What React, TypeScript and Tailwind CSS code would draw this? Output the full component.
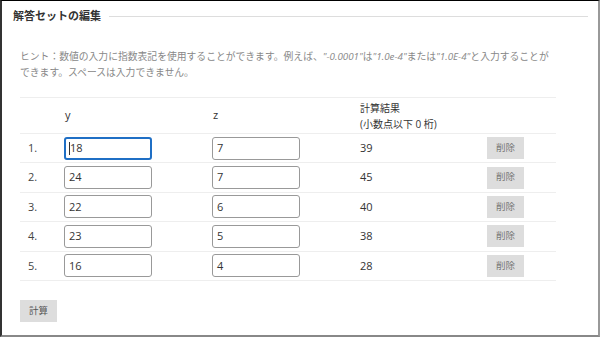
const rows = [
  { n: 1, y: '18', z: '7', r: '39' },
  { n: 2, y: '24', z: '7', r: '45' },
  { n: 3, y: '22', z: '6', r: '40' },
  { n: 4, y: '23', z: '5', r: '38' },
  { n: 5, y: '16', z: '4', r: '28' },
];

const font = { fontFamily: '"Open Sans", "Noto Sans CJK JP", sans-serif' };

const App = () => {
  return (
    <div
      className="w-[600px] h-[337px] bg-white border-t border-l-2 border-r-2 border-b-2 border-t-black border-l-[#333] border-r-[#999] border-b-[#888] overflow-hidden text-[#333]"
      style={font}
    >
      <div className="flex items-center pl-[11px] pr-[10px] pt-[7px]">
        <h2 className="text-[11px] font-bold text-[#333] leading-[16px] whitespace-nowrap">解答セットの編集</h2>
        <div className="flex-1 ml-[8px] h-px bg-[#ddd]" />
      </div>

      <div className="pl-[18px] pr-[20px] pt-[25px]">
        <p className="text-[9.8px] leading-[16px] text-[#888] whitespace-nowrap">
          ヒント：数値の入力に指数表記を使用することができます。例えば、
          <i>"-0.0001"</i>は<i>"1.0e-4"</i>または<i>"1.0E-4"</i>と入力することが
          <br />
          できます。スペースは入力できません。
        </p>

        <div className="mt-[16px] w-[536px] border-t border-[#eee] text-[11px]">
          <div className="grid grid-cols-[44px_148px_148px_127px_69px] h-[36px] border-b border-[#eee] items-center">
            <div />
            <div className="pl-[1px] text-[#333]">y</div>
            <div className="pl-[1px] text-[#333]">z</div>
            <div className="text-[10px] leading-[16px] text-[#333]">
              <div>計算結果</div>
              <div>(小数点以下 0 桁)</div>
            </div>
            <div />
          </div>
          {rows.map((row) => (
            <div
              key={row.n}
              className="grid grid-cols-[44px_148px_148px_127px_69px] h-[29.4px] border-b border-[#eee] items-center"
            >
              <div className="pl-[8px] text-[#444]">{row.n}.</div>
              <div>
                <div
                  className={
                    row.n === 1
                      ? 'w-[88px] h-[23px] rounded-[3px] border-2 border-[#1f6fc5] flex items-center pl-[3px] text-[#333]'
                      : 'w-[88px] h-[23px] rounded-[3px] border border-[#999] flex items-center pl-[4px] text-[#333]'
                  }
                >
                  {row.n === 1 && <span className="w-px h-[13px] bg-[#333]" />}
                  {row.y}
                </div>
              </div>
              <div>
                <div className="w-[88px] h-[23px] rounded-[3px] border border-[#999] flex items-center pl-[4px] text-[#333]">
                  {row.z}
                </div>
              </div>
              <div className="text-[#333]">{row.r}</div>
              <div>
                <button className="w-[37px] h-[22px] bg-[#ddd] text-[9.5px] text-[#777]">削除</button>
              </div>
            </div>
          ))}
        </div>

        <button className="mt-[19px] w-[37px] h-[22px] bg-[#ddd] text-[9.5px] text-[#555]">計算</button>
      </div>
    </div>
  );
};

export default App;
